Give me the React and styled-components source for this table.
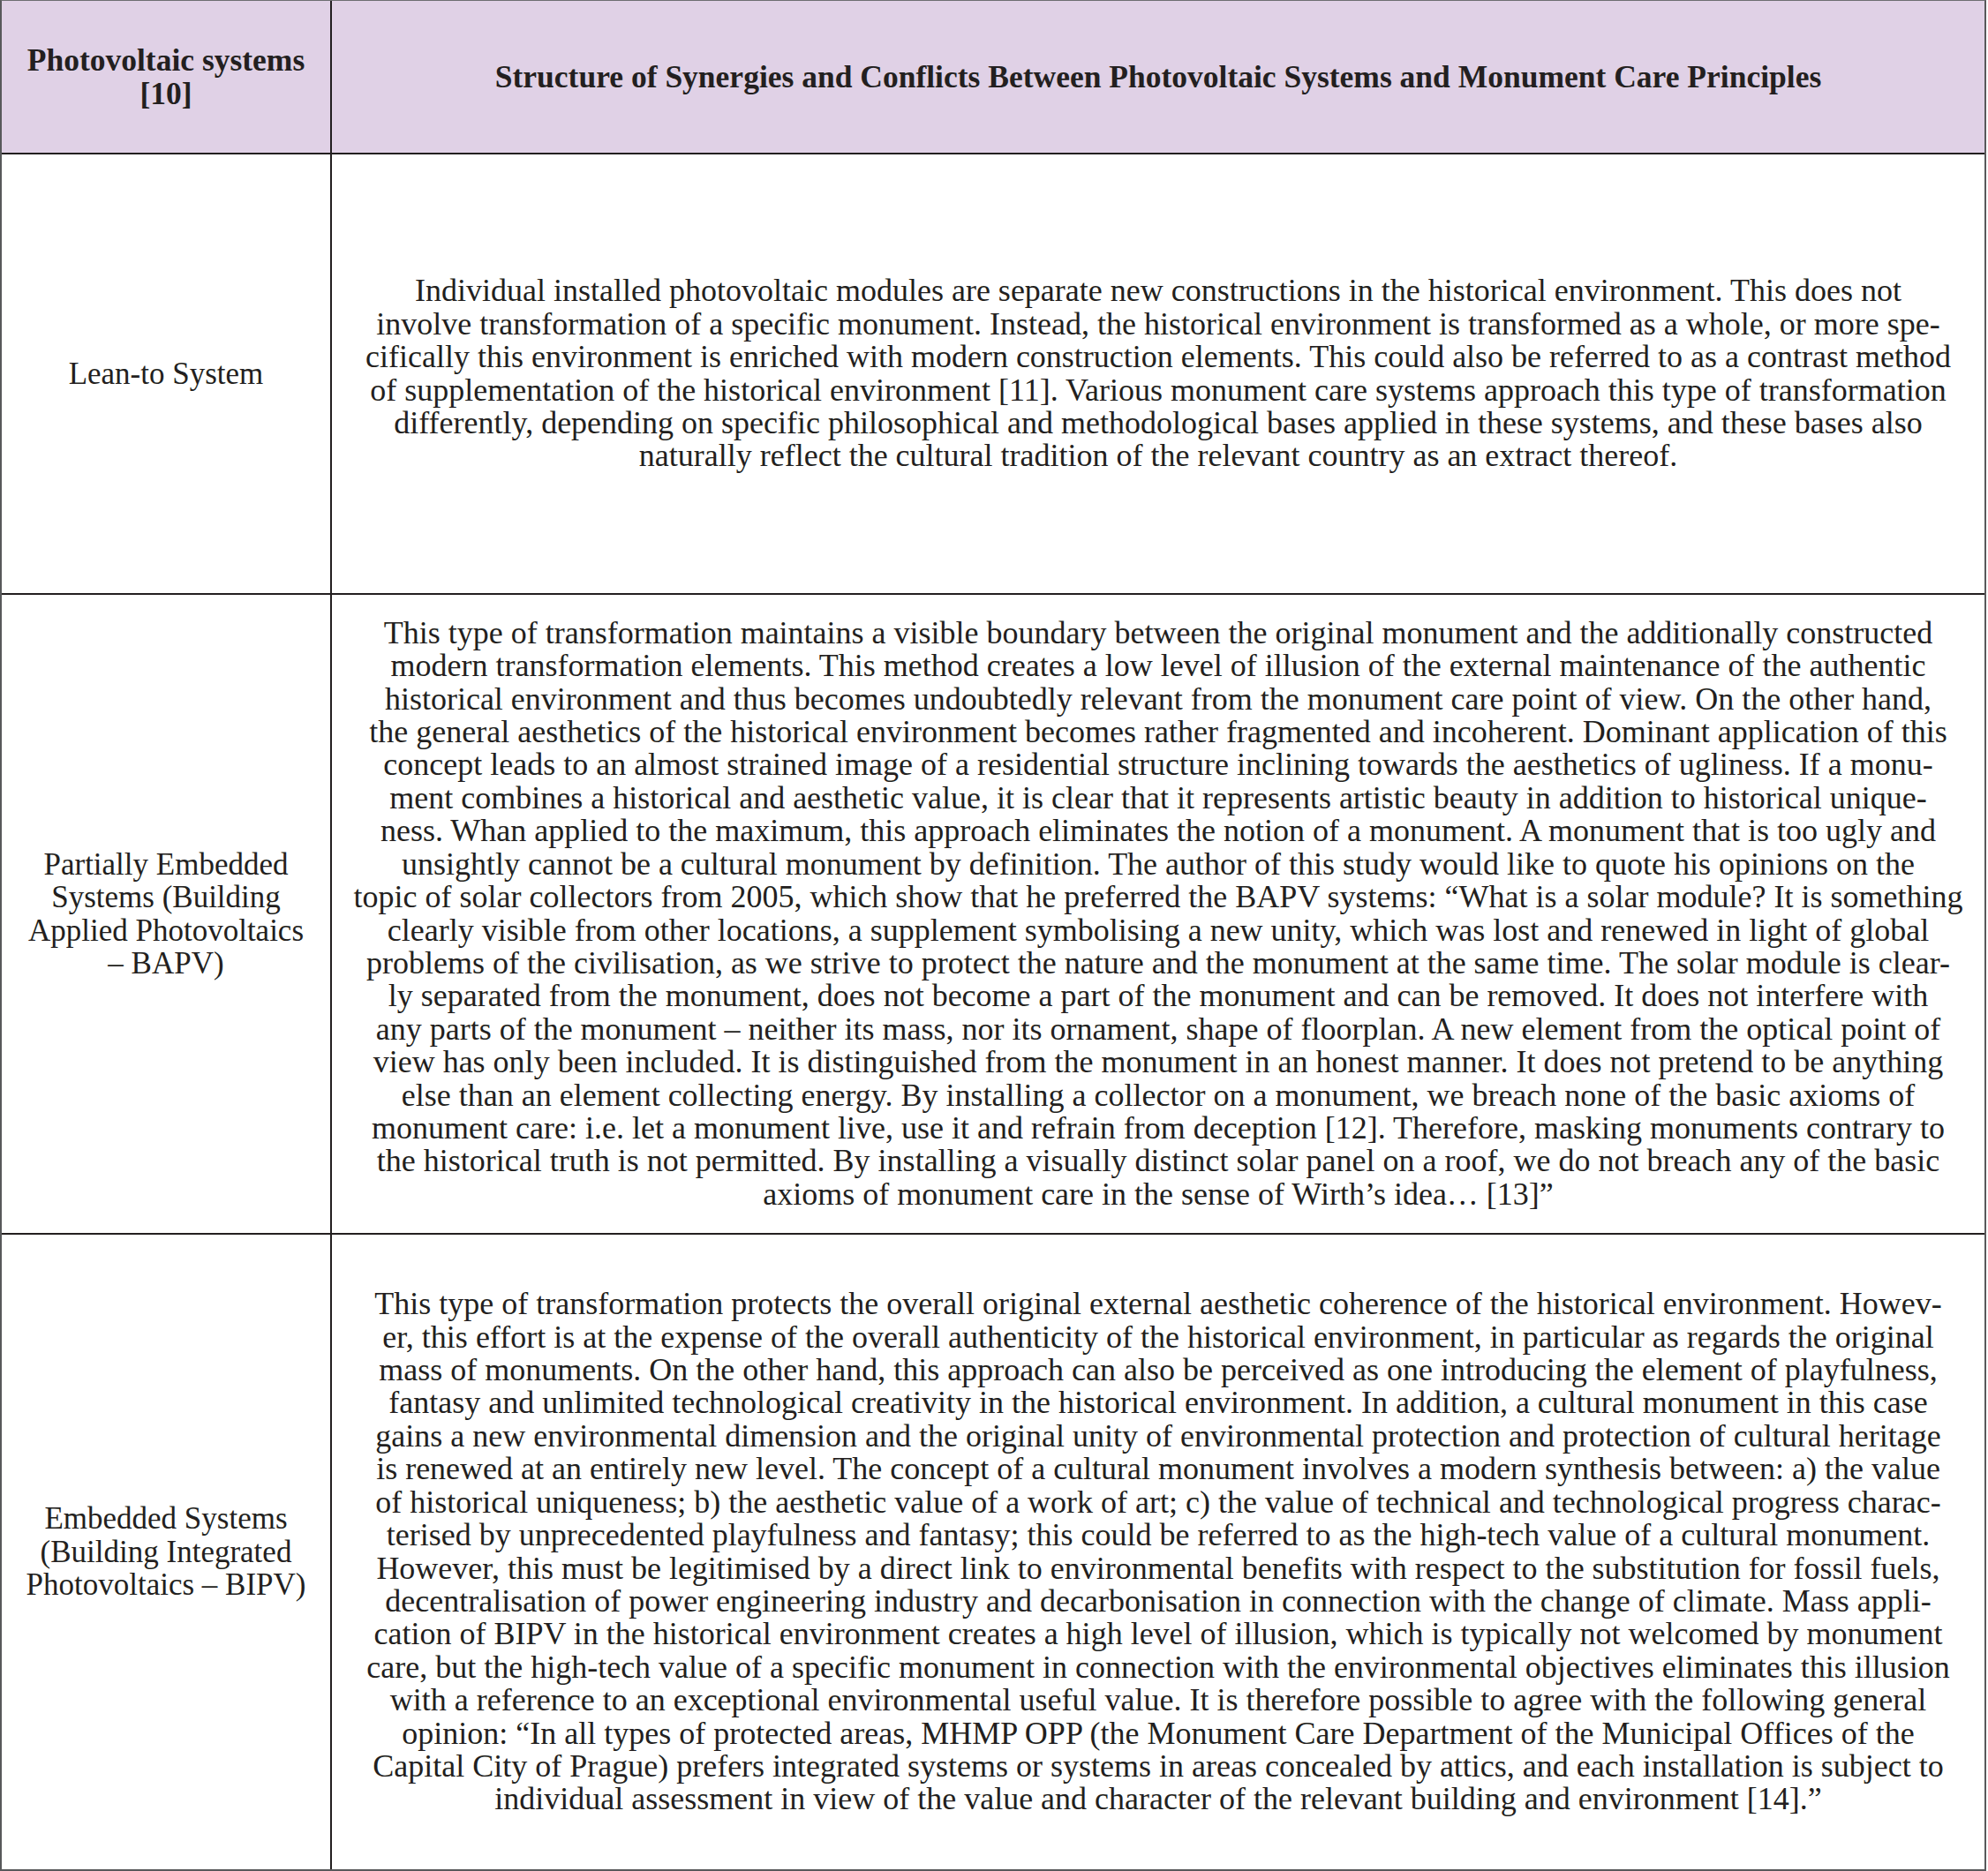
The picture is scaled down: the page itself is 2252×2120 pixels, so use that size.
import React from 'react';
import styled, { createGlobalStyle } from 'styled-components';

const GlobalStyle = createGlobalStyle`
  html, body {
    margin: 0;
    padding: 0;
    background: #fff;
  }
`;

const Frame = styled.div`
  width: 2250px;
  border-top: 1px solid #6d6e71;
  border-left: 2px solid #58595b;
  border-right: 2px solid #58595b;
  border-bottom: 2px solid #58595b;
  box-sizing: border-box;
`;

const Table = styled.table`
  width: 100%;
  border-collapse: collapse;
  table-layout: fixed;
  font-family: 'Liberation Serif', 'Times New Roman', serif;
  color: #231f20;
`;

const Row = styled.tr`
  height: ${p => p.$height}px;
`;

const HeadCell = styled.th`
  box-sizing: border-box;
  background: #e0d1e6;
  font-weight: 700;
  font-size: 35.5px;
  line-height: 38px;
  text-align: center;
  vertical-align: middle;
  padding: 0 8px;
  border: 2px solid #231f20;
  border-top: none;
  &:first-child { border-left: none; width: 373px; }
  &:last-child { border-right: none; }
`;

const Cell = styled.td`
  font-size: ${p => p.$size}px;
  line-height: 37.4px;
  text-align: center;
  vertical-align: middle;
  padding: 0 6px;
  border: 2px solid #231f20;
  &:first-child { border-left: none; }
  &:last-child { border-right: none; }
  tr:last-child > & { border-bottom: none; }
`;

const Line = styled.span`
  display: block;
  white-space: nowrap;
`;

const rows = [
  {
    height: 499,
    label: ['Lean-to System'],
    lines: [
      'Individual installed photovoltaic modules are separate new constructions in the historical environment. This does not',
      'involve transformation of a specific monument. Instead, the historical environment is transformed as a whole, or more spe-',
      'cifically this environment is enriched with modern construction elements. This could also be referred to as a contrast method',
      'of supplementation of the historical environment [11]. Various monument care systems approach this type of transformation',
      'differently, depending on specific philosophical and methodological bases applied in these systems, and these bases also',
      'naturally reflect the cultural tradition of the relevant country as an extract thereof.',
    ],
  },
  {
    height: 725,
    label: ['Partially Embedded', 'Systems (Building', 'Applied Photovoltaics', '– BAPV)'],
    lines: [
      'This type of transformation maintains a visible boundary between the original monument and the additionally constructed',
      'modern transformation elements. This method creates a low level of illusion of the external maintenance of the authentic',
      'historical environment and thus becomes undoubtedly relevant from the monument care point of view. On the other hand,',
      'the general aesthetics of the historical environment becomes rather fragmented and incoherent. Dominant application of this',
      'concept leads to an almost strained image of a residential structure inclining towards the aesthetics of ugliness. If a monu-',
      'ment combines a historical and aesthetic value, it is clear that it represents artistic beauty in addition to historical unique-',
      'ness. Whan applied to the maximum, this approach eliminates the notion of a monument. A monument that is too ugly and',
      'unsightly cannot be a cultural monument by definition. The author of this study would like to quote his opinions on the',
      'topic of solar collectors from 2005, which show that he preferred the BAPV systems: “What is a solar module? It is something',
      'clearly visible from other locations, a supplement symbolising a new unity, which was lost and renewed in light of global',
      'problems of the civilisation, as we strive to protect the nature and the monument at the same time. The solar module is clear-',
      'ly separated from the monument, does not become a part of the monument and can be removed. It does not interfere with',
      'any parts of the monument – neither its mass, nor its ornament, shape of floorplan. A new element from the optical point of',
      'view has only been included. It is distinguished from the monument in an honest manner. It does not pretend to be anything',
      'else than an element collecting energy. By installing a collector on a monument, we breach none of the basic axioms of',
      'monument care: i.e. let a monument live, use it and refrain from deception [12]. Therefore, masking monuments contrary to',
      'the historical truth is not permitted. By installing a visually distinct solar panel on a roof, we do not breach any of the basic',
      'axioms of monument care in the sense of Wirth’s idea… [13]”',
    ],
  },
  {
    height: 720,
    label: ['Embedded Systems', '(Building Integrated', 'Photovoltaics – BIPV)'],
    lines: [
      'This type of transformation protects the overall original external aesthetic coherence of the historical environment. Howev-',
      'er, this effort is at the expense of the overall authenticity of the historical environment, in particular as regards the original',
      'mass of monuments. On the other hand, this approach can also be perceived as one introducing the element of playfulness,',
      'fantasy and unlimited technological creativity in the historical environment. In addition, a cultural monument in this case',
      'gains a new environmental dimension and the original unity of environmental protection and protection of cultural heritage',
      'is renewed at an entirely new level. The concept of a cultural monument involves a modern synthesis between: a) the value',
      'of historical uniqueness; b) the aesthetic value of a work of art; c) the value of technical and technological progress charac-',
      'terised by unprecedented playfulness and fantasy; this could be referred to as the high-tech value of a cultural monument.',
      'However, this must be legitimised by a direct link to environmental benefits with respect to the substitution for fossil fuels,',
      'decentralisation of power engineering industry and decarbonisation in connection with the change of climate. Mass appli-',
      'cation of BIPV in the historical environment creates a high level of illusion, which is typically not welcomed by monument',
      'care, but the high-tech value of a specific monument in connection with the environmental objectives eliminates this illusion',
      'with a reference to an exceptional environmental useful value. It is therefore possible to agree with the following general',
      'opinion: “In all types of protected areas, MHMP OPP (the Monument Care Department of the Municipal Offices of the',
      'Capital City of Prague) prefers integrated systems or systems in areas concealed by attics, and each installation is subject to',
      'individual assessment in view of the value and character of the relevant building and environment [14].”',
    ],
  },
];

const Lines = ({ items }) => items.map((text, i) => <Line key={i}>{text}</Line>);

export default function App() {
  return (
    <>
      <GlobalStyle />
      <Frame>
        <Table>
          <thead>
            <Row $height={173}>
              <HeadCell>
                <Lines items={['Photovoltaic systems', '[10]']} />
              </HeadCell>
              <HeadCell>
                Structure of Synergies and Conflicts Between Photovoltaic Systems and Monument Care Principles
              </HeadCell>
            </Row>
          </thead>
          <tbody>
            {rows.map((row, i) => (
              <Row key={i} $height={row.height}>
                <Cell $size={35}>
                  <Lines items={row.label} />
                </Cell>
                <Cell $size={36}>
                  <Lines items={row.lines} />
                </Cell>
              </Row>
            ))}
          </tbody>
        </Table>
      </Frame>
    </>
  );
}
